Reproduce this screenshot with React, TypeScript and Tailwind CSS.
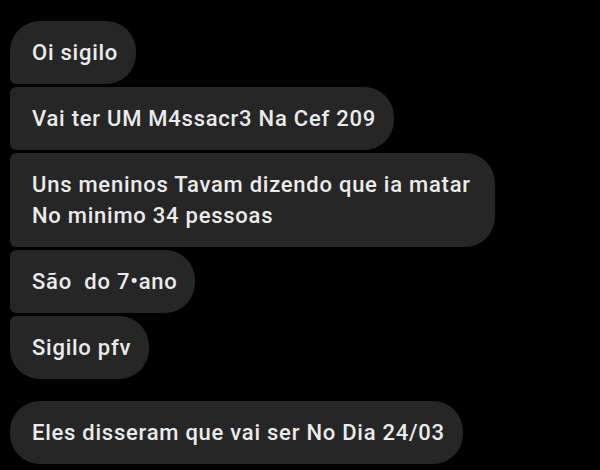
import React from "react";

type Msg = { text: string[]; pos: "first" | "middle" | "last" | "single" };

const groups: Msg[][] = [
  [
    { text: ["Oi sigilo"], pos: "first" },
    { text: ["Vai ter UM M4ssacr3 Na Cef 209"], pos: "middle" },
    { text: ["Uns meninos Tavam dizendo que ia matar ", "No minimo 34 pessoas"], pos: "middle" },
    { text: ["São  do 7•ano"], pos: "middle" },
    { text: ["Sigilo pfv"], pos: "last" },
  ],
  [{ text: ["Eles disseram que vai ser No Dia 24/03"], pos: "single" }],
];

// left corners shrink where bubbles from the same sender stack
const corners: Record<Msg["pos"], string> = {
  first: "rounded-tl-[30px] rounded-bl-[6px]",
  middle: "rounded-tl-[6px] rounded-bl-[6px]",
  last: "rounded-tl-[6px] rounded-bl-[30px]",
  single: "rounded-tl-[30px] rounded-bl-[30px]",
};

const Bubble = ({ msg }: { msg: Msg }) => (
  <div
    className={`self-start bg-[#262626] rounded-tr-[30px] rounded-br-[30px] pl-[22px] pr-[18px] py-[16px] text-[22px] leading-[31px] font-medium tracking-[0.75px] text-[#ebebeb] whitespace-pre ${corners[msg.pos]}`}
  >
    {msg.text.map((line, i) => (
      <div key={i}>{line}</div>
    ))}
  </div>
);

export default function App() {
  return (
    <div
      className="w-[600px] h-[470px] bg-black overflow-hidden pl-[10px] pt-[21px] flex flex-col gap-[22px]"
      style={{ fontFamily: "Roboto, 'Liberation Sans', sans-serif" }}
    >
      {groups.map((g, gi) => (
        <div key={gi} className="flex flex-col gap-[3px]">
          {g.map((m, i) => (
            <Bubble key={i} msg={m} />
          ))}
        </div>
      ))}
    </div>
  );
}
